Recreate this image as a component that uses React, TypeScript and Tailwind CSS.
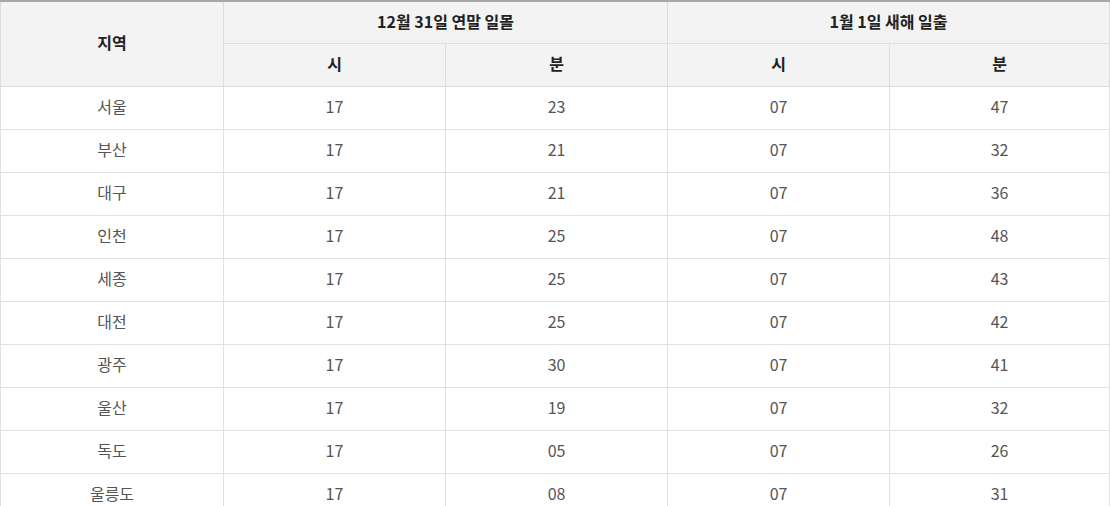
const rows: [string, string, string, string, string][] = [
  ["서울", "17", "23", "07", "47"],
  ["부산", "17", "21", "07", "32"],
  ["대구", "17", "21", "07", "36"],
  ["인천", "17", "25", "07", "48"],
  ["세종", "17", "25", "07", "43"],
  ["대전", "17", "25", "07", "42"],
  ["광주", "17", "30", "07", "41"],
  ["울산", "17", "19", "07", "32"],
  ["독도", "17", "05", "07", "26"],
  ["울릉도", "17", "08", "07", "31"],
];

export default function App() {
  const th = "border border-[#dddddd] bg-[#f3f3f3] text-center font-bold text-[16px] text-[#222222] pb-[3px]";
  const td = "border border-[#e1e1e1] h-[43px] text-center text-[16px] text-[#555555] pb-[3px]";
  return (
    <div className="w-[1110px] bg-white" style={{ fontFamily: '"Noto Sans CJK KR", "Noto Sans", sans-serif' }}>
      <table className="w-full border-collapse table-fixed border-t-2 border-t-[#a8a8a8]">
        <colgroup>
          <col className="w-[223px]" />
          <col className="w-[222px]" />
          <col className="w-[222px]" />
          <col className="w-[222px]" />
          <col />
        </colgroup>
        <thead>
          <tr className="h-[42px]">
            <th rowSpan={2} className={th}>지역</th>
            <th colSpan={2} className={th}>12월 31일 연말 일몰</th>
            <th colSpan={2} className={th}>1월 1일 새해 일출</th>
          </tr>
          <tr className="h-[43px]">
            <th className={th}>시</th>
            <th className={th}>분</th>
            <th className={th}>시</th>
            <th className={th}>분</th>
          </tr>
        </thead>
        <tbody>
          {rows.map((r) => (
            <tr key={r[0]}>
              {r.map((c, i) => (
                <td key={i} className={td}>{c}</td>
              ))}
            </tr>
          ))}
        </tbody>
      </table>
    </div>
  );
}
